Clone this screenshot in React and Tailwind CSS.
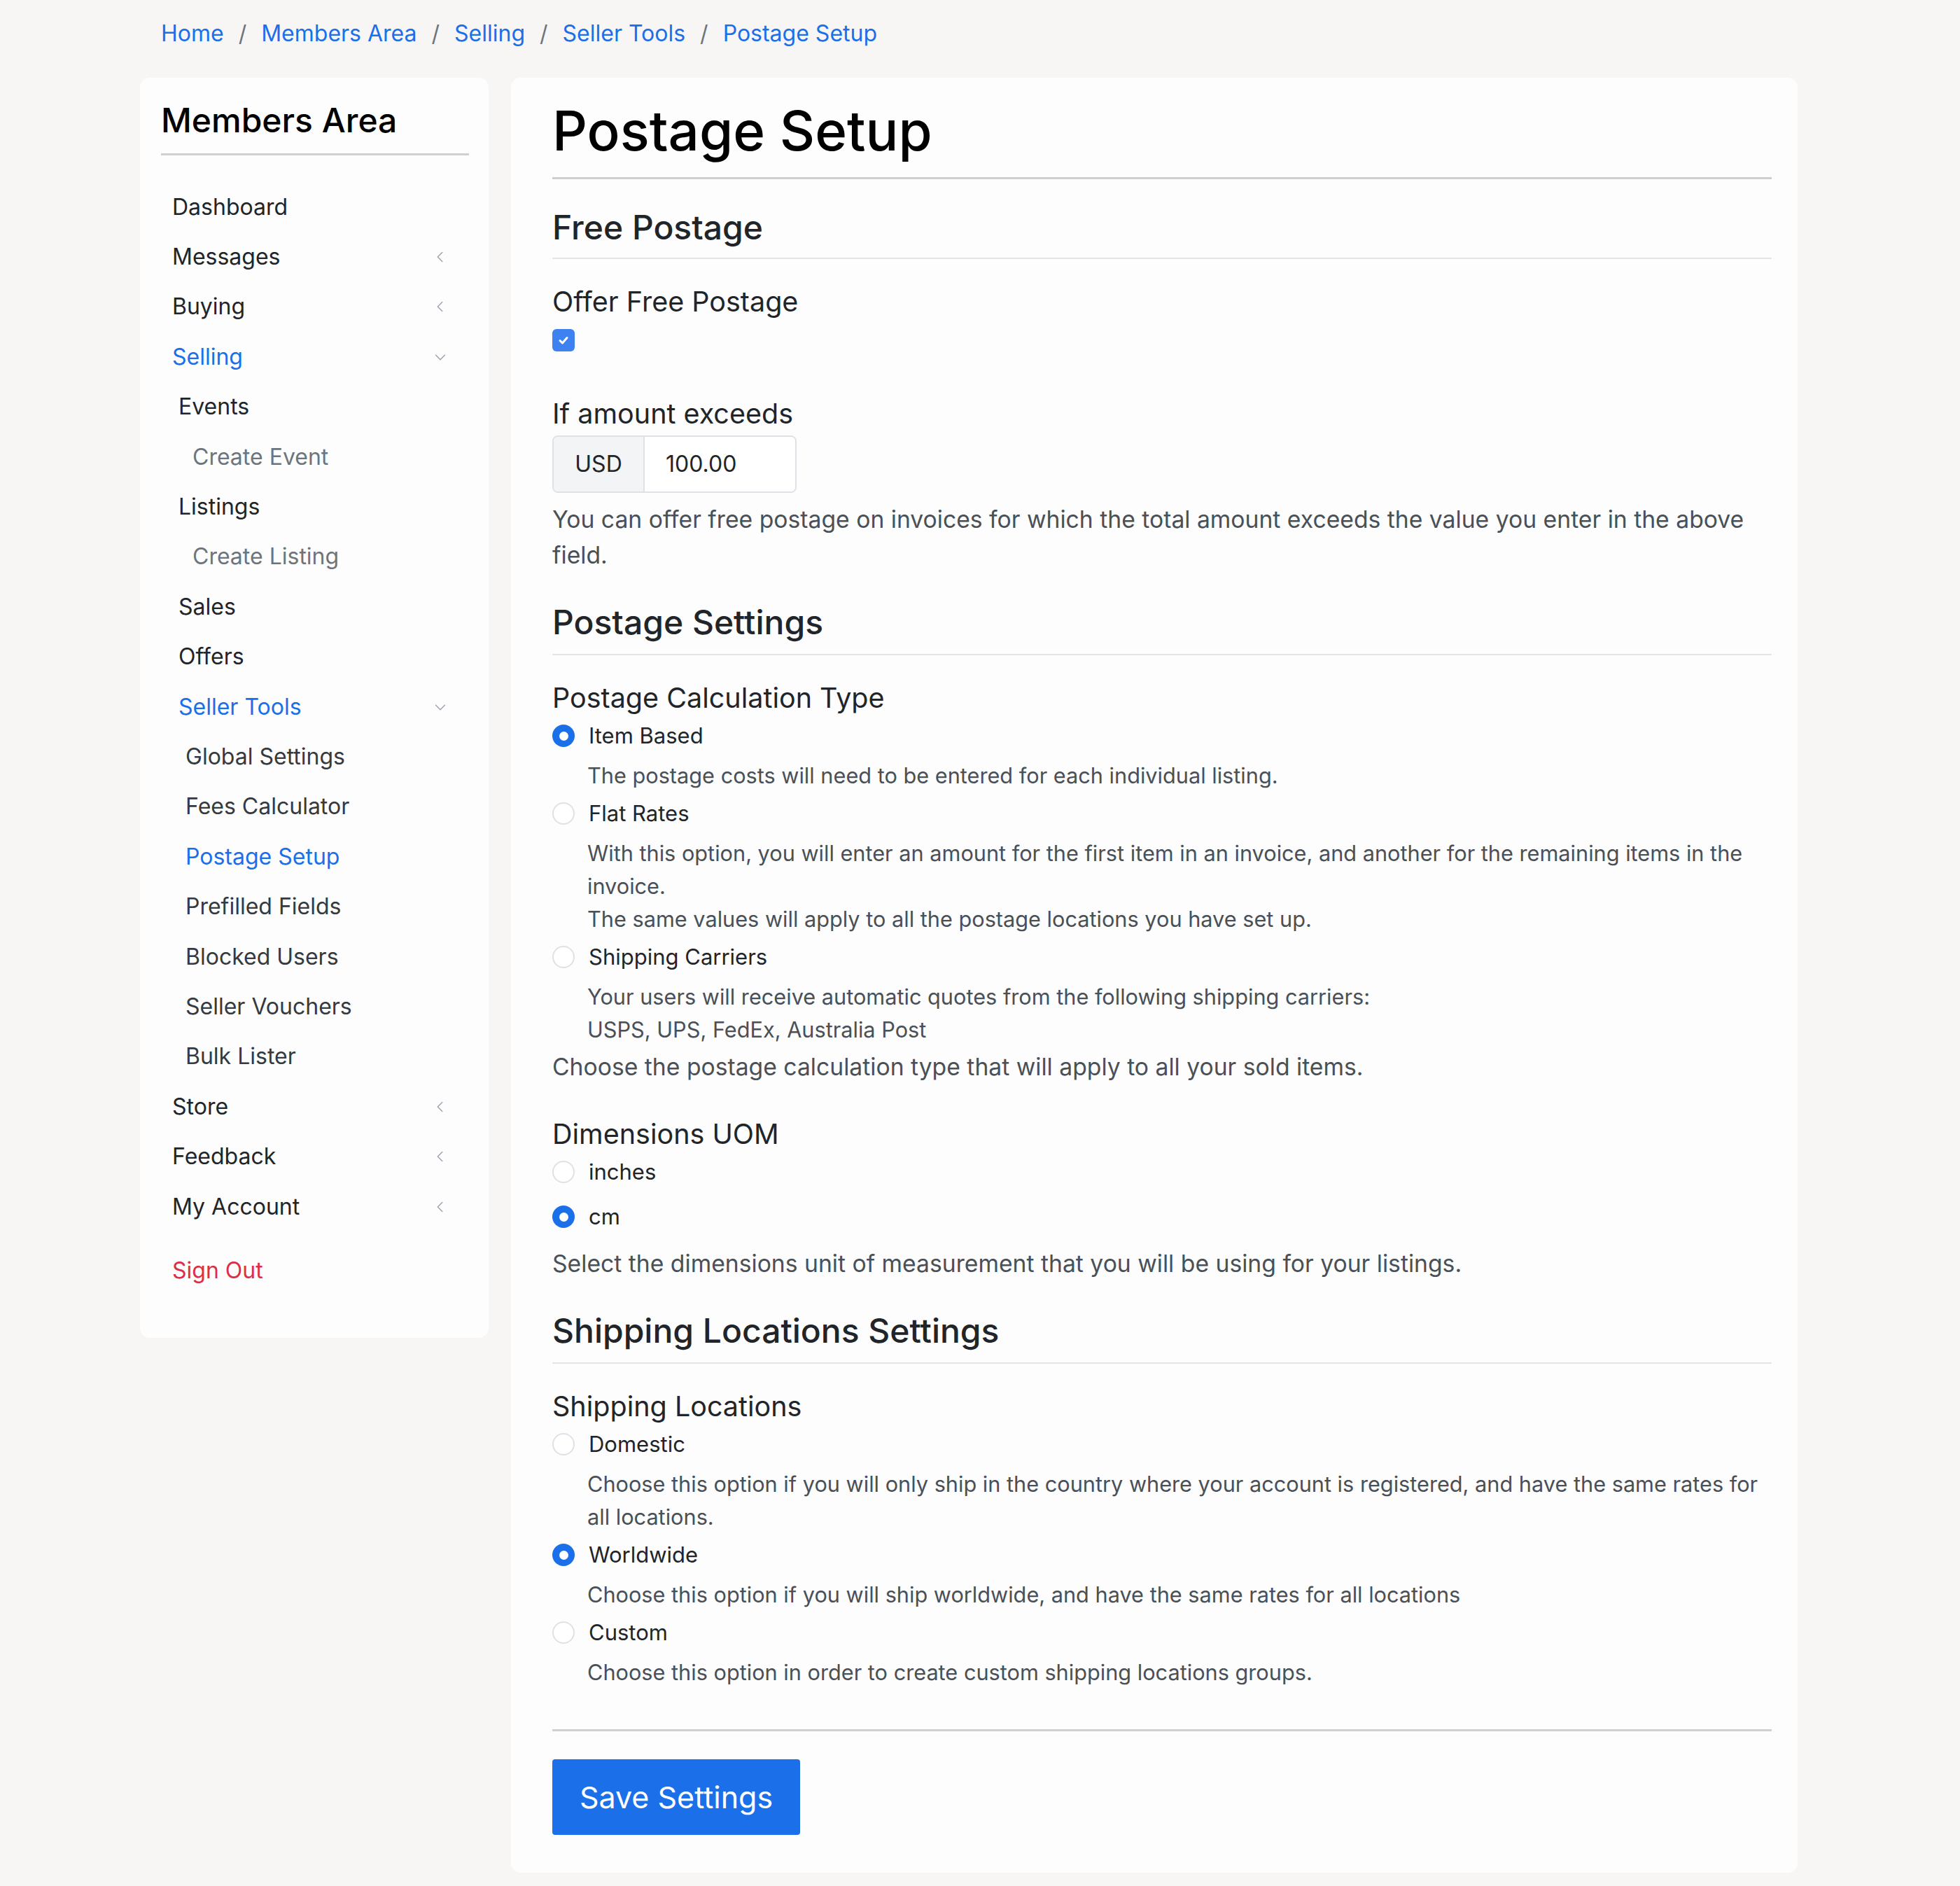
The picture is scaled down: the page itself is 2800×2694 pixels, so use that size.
import React from "react";

const Chev = ({ down }) => (
  <svg width="22" height="22" viewBox="0 0 24 24" fill="none" stroke="#9ca3af" strokeWidth="1.6" strokeLinecap="round" strokeLinejoin="round">
    {down ? <path d="M5 9l7 7 7-7" /> : <path d="M15 5l-7 7 7 7" />}
  </svg>
);

const Nav = ({ label, pl, cls = "text-[#212529]", chev }) => (
  <div className={`h-[71.4px] flex items-center justify-between pr-[58px] text-[32px] ${cls}`} style={{ paddingLeft: pl }}>
    <span>{label}</span>
    {chev && <Chev down={chev === "down"} />}
  </div>
);

const Radio = ({ on }) =>
  on ? (
    <span className="w-[32px] h-[32px] rounded-full bg-[#1b6fe8] flex items-center justify-center shrink-0">
      <span className="w-[13px] h-[13px] rounded-full bg-white" />
    </span>
  ) : (
    <span className="w-[32px] h-[32px] rounded-full border-2 border-[#dee2e6] bg-white shrink-0" />
  );

const Opt = ({ on, label, children }) => (
  <div>
    <div className="flex items-center gap-[20px] h-[54px] text-[31px] text-[#212529]">
      <Radio on={on} />
      <span>{label}</span>
    </div>
    {children && <div className="pl-[50px] text-[30.7px] leading-[47px] text-[#495057] pt-[6px] pb-[4px]">{children}</div>}
  </div>
);

export default function App() {
  return (
    <div className="min-h-[2694px] bg-[#f7f6f5] pl-[200px] pr-[232px]" style={{ fontFamily: "Inter, 'Noto Sans', sans-serif" }}>
      <div className="h-[111px] flex items-start pt-[24px] pl-[30px] text-[32px] text-[#1b6fe8] gap-[21px]">
        <span>Home</span><span className="text-[#6c757d]">/</span>
        <span>Members Area</span><span className="text-[#6c757d]">/</span>
        <span>Selling</span><span className="text-[#6c757d]">/</span>
        <span>Seller Tools</span><span className="text-[#6c757d]">/</span>
        <span>Postage Setup</span>
      </div>
      <div className="flex gap-[32px] items-start">
        <div className="w-[498px] h-[1800px] bg-[#fdfdfd] rounded-[14px] px-[30px] pt-[26px]">
          <div className="text-[48px] font-medium text-black leading-[70px] pb-[12px] border-b-[3px] border-[#d0d0d0] mr-[-2px]">Members Area</div>
          <div className="mt-[38px] -mx-[30px]">
            <Nav label="Dashboard" pl={46} />
            <Nav label="Messages" pl={46} chev="left" />
            <Nav label="Buying" pl={46} chev="left" />
            <Nav label="Selling" pl={46} cls="text-[#1b6fe8]" chev="down" />
            <Nav label="Events" pl={55} />
            <Nav label="Create Event" pl={75} cls="text-[#6c757d]" />
            <Nav label="Listings" pl={55} />
            <Nav label="Create Listing" pl={75} cls="text-[#6c757d]" />
            <Nav label="Sales" pl={55} />
            <Nav label="Offers" pl={55} />
            <Nav label="Seller Tools" pl={55} cls="text-[#1b6fe8]" chev="down" />
            {["Global Settings", "Fees Calculator"].map((l) => <Nav key={l} label={l} pl={65} cls="text-[#343a40]" />)}
            <Nav label="Postage Setup" pl={65} cls="text-[#1b6fe8]" />
            {["Prefilled Fields", "Blocked Users", "Seller Vouchers", "Bulk Lister"].map((l) => <Nav key={l} label={l} pl={65} cls="text-[#343a40]" />)}
            <Nav label="Store" pl={46} chev="left" />
            <Nav label="Feedback" pl={46} chev="left" />
            <Nav label="My Account" pl={46} chev="left" />
            <div className="h-[20px]" />
            <Nav label="Sign Out" pl={46} cls="text-[#dc2f45]" />
          </div>
        </div>
        <div className="flex-1 h-[2564px] bg-[#fdfdfd] rounded-[14px] pl-[59px] pr-[37px] pt-[26px] text-[#212529]">
          <h1 className="text-[78px] font-medium leading-[100px] text-black pb-[16px] border-b-[3px] border-[#cfcfcf]">Postage Setup</h1>
          <h2 className="text-[48px] font-medium leading-[70px] mt-[34px] pb-[8px] border-b-[2px] border-[#e4e4e7]">Free Postage</h2>
          <div className="text-[39.5px] leading-[54px] mt-[34px]">Offer Free Postage</div>
          <div className="w-[32px] h-[32px] rounded-[6px] bg-[#3d82f0] flex items-center justify-center mt-[12px]">
            <svg width="20" height="20" viewBox="0 0 20 20" fill="none" stroke="white" strokeWidth="3" strokeLinecap="round" strokeLinejoin="round"><path d="M5 10.5l3.5 3.5L15 6.5" /></svg>
          </div>
          <div className="text-[39.5px] leading-[54px] mt-[62px]">If amount exceeds</div>
          <div className="flex mt-[4px] h-[82px] w-[349px] border-2 border-[#dee2e6] rounded-[8px] overflow-hidden">
            <div className="w-[130px] bg-[#f3f4f6] border-r-2 border-[#dee2e6] flex items-center justify-center text-[32px]">USD</div>
            <div className="flex-1 bg-white flex items-center pl-[30px] text-[32px]">100.00</div>
          </div>
          <p className="text-[33.7px] leading-[51px] text-[#495057] mt-[12px]">You can offer free postage on invoices for which the total amount exceeds the value you enter in the above field.</p>
          <h2 className="text-[48px] font-medium leading-[70px] mt-[36px] pb-[10px] border-b-[2px] border-[#e4e4e7]">Postage Settings</h2>
          <div className="text-[39.5px] leading-[54px] mt-[34px]">Postage Calculation Type</div>
          <Opt on label="Item Based">The postage costs will need to be entered for each individual listing.</Opt>
          <Opt label="Flat Rates">With this option, you will enter an amount for the first item in an invoice, and another for the remaining items in the invoice.<br />The same values will apply to all the postage locations you have set up.</Opt>
          <Opt label="Shipping Carriers">Your users will receive automatic quotes from the following shipping carriers:<br />USPS, UPS, FedEx, Australia Post</Opt>
          <p className="text-[33.7px] leading-[51px] text-[#495057]">Choose the postage calculation type that will apply to all your sold items.</p>
          <div className="text-[39.5px] leading-[54px] mt-[44px]">Dimensions UOM</div>
          <Opt label="inches" />
          <div className="h-[10px]" />
          <Opt on label="cm" />
          <p className="text-[33.7px] leading-[51px] text-[#495057] mt-[14px]">Select the dimensions unit of measurement that you will be using for your listings.</p>
          <h2 className="text-[48px] font-medium leading-[70px] mt-[36px] pb-[10px] border-b-[2px] border-[#e4e4e7]">Shipping Locations Settings</h2>
          <div className="text-[39.5px] leading-[54px] mt-[34px]">Shipping Locations</div>
          <Opt label="Domestic">Choose this option if you will only ship in the country where your account is registered, and have the same rates for all locations.</Opt>
          <Opt on label="Worldwide">Choose this option if you will ship worldwide, and have the same rates for all locations</Opt>
          <Opt label="Custom">Choose this option in order to create custom shipping locations groups.</Opt>
          <div className="border-t-[3px] border-[#d0d0d0] mt-[54px]" />
          <button className="mt-[40px] h-[108px] w-[354px] bg-[#1b6fe8] text-white text-[43px] rounded-[4px]">Save Settings</button>
        </div>
      </div>
    </div>
  );
}
